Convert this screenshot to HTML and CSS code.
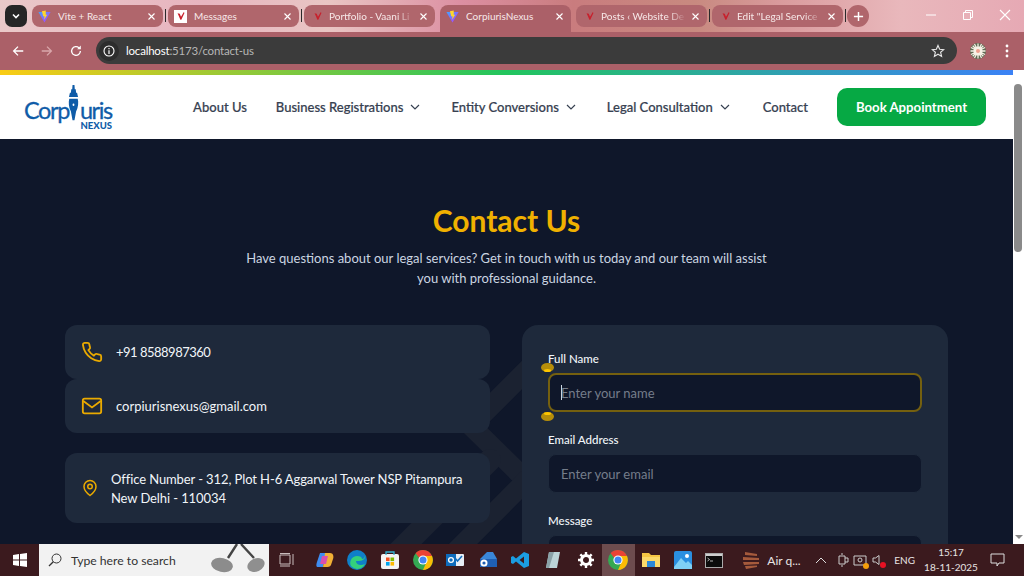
FILE: index.html
```html
<!DOCTYPE html>
<html lang="en">

<head>
    <meta charset="UTF-8">
    <meta name="viewport" content="width=device-width, initial-scale=1.0">
    <title>Contact Us</title>
    <link rel="stylesheet" href="styles.css">
</head>

<body>
    <svg class="defs" width="0" height="0">
        <defs>
            <linearGradient id="viteBody" x1="0" y1="0" x2="1" y2="1">
                <stop offset="0" stop-color="#41a5ff" />
                <stop offset="1" stop-color="#bd34fe" />
            </linearGradient>
            <symbol id="vite" viewBox="0 0 16 16">
                <path d="M0.5 2.5 L15.5 2.5 L8 15.5 Z" fill="url(#viteBody)" />
                <path d="M9.5 0.5 L4.8 1.6 L6.5 8 L8 7.5 L7.5 12 L11.5 5.5 L9.6 6 Z" fill="#ffd62e" />
            </symbol>
            <symbol id="check" viewBox="0 0 16 16">
                <path d="M2.5 3.5 L6 4.5 L8 9 L12.5 1.5 L13.5 3 L8.5 14 L7 14 L4.5 8 Z" fill="#c8202c" />
            </symbol>
            <symbol id="close" viewBox="0 0 12 12">
                <path d="M2 2 L10 10 M10 2 L2 10" stroke="#fff" stroke-width="1.5" fill="none" />
            </symbol>
            <symbol id="chromeLogo" viewBox="0 0 20 20">
                <circle cx="10" cy="10" r="10" fill="#34a853" />
                <path d="M10 0 A10 10 0 0 1 19 6 H10 A4 4 0 0 0 6.400 8.200 L2.600 3.300 A10 10 0 0 1 10 0 Z" fill="#ea4335" />
                <path d="M19 6 A10 10 0 0 1 10 20 L13.500 12 A4 4 0 0 0 13.500 8 L12 6 Z" fill="#fbbc05" />
                <circle cx="10" cy="10" r="4.600" fill="#fff" />
                <circle cx="10" cy="10" r="3.500" fill="#4285f4" />
            </symbol>
        </defs>
    </svg>

    <div class="chrome">
        <div class="tabstrip">
            <div class="tab-search">
                <svg width="10" height="10" viewBox="0 0 10 10">
                    <path d="M2 3.5 L5 6.5 L8 3.5" stroke="#fff" stroke-width="1.6" fill="none" />
                </svg>
            </div>
            <div class="tab">
                <svg class="favicon"><use href="#vite" /></svg>
                <span class="tab-title">Vite + React</span>
                <svg class="tab-close"><use href="#close" /></svg>
            </div>
            <span class="tab-sep"></span>
            <div class="tab">
                <span class="favicon-box"><svg class="favicon-small"><use href="#check" /></svg></span>
                <span class="tab-title">Messages</span>
                <svg class="tab-close"><use href="#close" /></svg>
            </div>
            <span class="tab-sep"></span>
            <div class="tab">
                <svg class="favicon-plain"><use href="#check" /></svg>
                <span class="tab-title tab-fade">Portfolio - Vaani Li</span>
                <svg class="tab-close"><use href="#close" /></svg>
            </div>
            <div class="tab tab-active">
                <svg class="favicon"><use href="#vite" /></svg>
                <span class="tab-title">CorpiurisNexus</span>
                <svg class="tab-close"><use href="#close" /></svg>
            </div>
            <div class="tab">
                <svg class="favicon-plain"><use href="#check" /></svg>
                <span class="tab-title tab-fade">Posts ‹ Website De</span>
                <svg class="tab-close"><use href="#close" /></svg>
            </div>
            <span class="tab-sep"></span>
            <div class="tab">
                <svg class="favicon-plain"><use href="#check" /></svg>
                <span class="tab-title tab-fade">Edit "Legal Service</span>
                <svg class="tab-close"><use href="#close" /></svg>
            </div>
            <span class="tab-sep"></span>
            <div class="tab-new">
                <svg width="11" height="11" viewBox="0 0 12 12">
                    <path d="M6 1 V11 M1 6 H11" stroke="#fff" stroke-width="1.6" />
                </svg>
            </div>
            <div class="window-controls">
                <svg width="12" height="12" viewBox="0 0 12 12">
                    <path d="M1 6 H11" stroke="#fff" stroke-width="1" />
                </svg>
                <svg width="12" height="12" viewBox="0 0 12 12">
                    <path d="M3.5 3 V1.5 H10.5 V8.5 H9 M1.5 3.5 H8.5 V10.5 H1.5 Z" stroke="#fff" stroke-width="1" fill="none" />
                </svg>
                <svg width="12" height="12" viewBox="0 0 12 12">
                    <path d="M1 1 L11 11 M11 1 L1 11" stroke="#fff" stroke-width="1.1" />
                </svg>
            </div>
        </div>

        <div class="toolbar">
            <svg class="tool-icon" viewBox="0 0 16 16">
                <path d="M14 8 H3 M8 3 L3 8 L8 13" stroke="#fff" stroke-width="1.5" fill="none" />
            </svg>
            <svg class="tool-icon" viewBox="0 0 16 16">
                <path d="M2 8 H13 M8 3 L13 8 L8 13" stroke="#d9a6aa" stroke-width="1.5" fill="none" />
            </svg>
            <svg class="tool-icon" viewBox="0 0 16 16">
                <path d="M13 8 A5 5 0 1 1 11.5 4.4" stroke="#fff" stroke-width="1.5" fill="none" />
                <path d="M13.5 1.8 V6 H9.3 Z" fill="#fff" />
            </svg>
            <div class="omnibox">
                <span class="omni-info">
                    <svg width="12" height="12" viewBox="0 0 12 12">
                        <circle cx="6" cy="6" r="5" stroke="#fff" stroke-width="1.1" fill="none" />
                        <path d="M6 5.2 V9 M6 3 V4.2" stroke="#fff" stroke-width="1.2" />
                    </svg>
                </span>
                <span class="omni-url"><b>localhost</b>:5173/contact-us</span>
                <svg class="omni-star" width="14" height="14" viewBox="0 0 16 16">
                    <path d="M8 1.6 L9.9 6 L14.6 6.4 L11 9.5 L12.1 14.2 L8 11.7 L3.9 14.2 L5 9.5 L1.4 6.4 L6.1 6 Z" stroke="#e6e6e6" stroke-width="1.3" fill="none" />
                </svg>
            </div>
            <svg class="avatar" width="16" height="16" viewBox="0 0 16 16">
                <circle cx="8" cy="8" r="8" fill="#5d6a52" />
                <path d="M8 0.5 V15.5 M0.5 8 H15.5 M2.700 2.700 L13.300 13.300 M13.300 2.700 L2.700 13.300 M4.500 1 L11.500 15 M11.500 1 L4.500 15 M1 4.500 L15 11.500 M15 4.500 L1 11.500" stroke="#f7f1e6" stroke-width="1.300" />
                <circle cx="8" cy="8" r="4.500" fill="#f7f1e6" />
                <circle cx="8" cy="8" r="2" fill="#ef9f8f" />
            </svg>
            <svg class="menu-dots" width="4" height="14" viewBox="0 0 4 14">
                <circle cx="2" cy="2" r="1.4" fill="#fff" />
                <circle cx="2" cy="7" r="1.4" fill="#fff" />
                <circle cx="2" cy="12" r="1.4" fill="#fff" />
            </svg>
        </div>
    </div>

    <div class="viewport">
        <div class="page">
            <div class="rainbow"></div>
            <header class="site-header">
                <a class="logo">
                    <svg class="logo-nib" viewBox="0 0 17 42" preserveAspectRatio="none">
                        <path d="M7 0 H10 L10.5 5 H12 L12.5 9 H14 L15.5 14 H1.5 L3 9 H4.5 L5 5 H6.5 Z" fill="#0f5ca8" />
                        <path d="M2 16 H15 C16.5 20 16 26 12.5 31 L10 41 H7 L4.5 31 C1 26 0.5 20 2 16 Z" fill="#0f5ca8" />
                        <circle cx="8.5" cy="23" r="1.4" fill="#fff" />
                    </svg>
                    <span class="logo-word">Corp<span class="logo-gap"></span>uris</span>
                    <span class="logo-sub">NEXUS</span>
                </a>
                <nav class="nav">
                    <a>About Us</a>
                    <a>Business Registrations <svg class="chev" viewBox="0 0 10 10"><path d="M1 3 L5 7 L9 3" /></svg></a>
                    <a>Entity Conversions <svg class="chev" viewBox="0 0 10 10"><path d="M1 3 L5 7 L9 3" /></svg></a>
                    <a class="nav-last-dropdown">Legal Consultation <svg class="chev" viewBox="0 0 10 10"><path d="M1 3 L5 7 L9 3" /></svg></a>
                    <a>Contact</a>
                    <a class="btn-book">Book Appointment</a>
                </nav>
            </header>

            <main class="contact">
                <svg class="contact-bg" width="1013" height="405" viewBox="0 0 1013 405">
                    <path d="M540 218 L471 287 L530 345" stroke="#1b2231" stroke-width="20" stroke-linecap="round" fill="none" />
                    <path d="M490 321 L395 416" stroke="#1b2231" stroke-width="22" stroke-linecap="round" fill="none" />
                    <path d="M530 338 L450 418" stroke="#1b2231" stroke-width="20" fill="none" />
                </svg>
                <h1 class="contact-title">Contact Us</h1>
                <p class="contact-sub">Have questions about our legal services? Get in touch with us today and our team will assist you with professional guidance.</p>

                <div class="contact-grid">
                    <div class="info-col">
                        <div class="info-card">
                            <svg class="info-icon" viewBox="0 0 24 24">
                                <path d="M22 16.920v3a2 2 0 0 1-2.180 2 19.790 19.790 0 0 1-8.630-3.070 19.500 19.500 0 0 1-6-6 19.790 19.790 0 0 1-3.070-8.670A2 2 0 0 1 4.110 2h3a2 2 0 0 1 2 1.720 12.840 12.840 0 0 0 .7 2.810 2 2 0 0 1-.45 2.110L8.090 9.910a16 16 0 0 0 6 6l1.270-1.270a2 2 0 0 1 2.110-.45 12.840 12.840 0 0 0 2.810.7A2 2 0 0 1 22 16.920z" />
                            </svg>
                            <span class="info-text info-phone">+91 8588987360</span>
                        </div>
                        <div class="info-card">
                            <svg class="info-icon" viewBox="0 0 24 24">
                                <rect x="2" y="4" width="20" height="16" rx="2" />
                                <path d="M2.500 6.500 L12 13.500 L21.500 6.500" />
                            </svg>
                            <span class="info-text">corpiurisnexus@gmail.com</span>
                        </div>
                        <div class="info-card info-card-tall">
                            <svg class="info-icon-pin" viewBox="0 0 24 24">
                                <path d="M20 10c0 6-8 12-8 12s-8-6-8-12a8 8 0 0 1 16 0Z" />
                                <circle cx="12" cy="10" r="3" />
                            </svg>
                            <span class="info-text info-address">Office Number - 312, Plot H-6 Aggarwal Tower NSP Pitampura<br>New Delhi - 110034</span>
                        </div>
                    </div>

                    <form class="form-card">
                        <label class="form-label">Full Name</label>
                        <div class="input-wrap">
                            <input class="form-input is-focus" type="text" placeholder="Enter your name">
                            <span class="caret"></span>
                            <span class="handle handle-top"></span>
                            <span class="handle handle-bottom"></span>
                        </div>
                        <label class="form-label">Email Address</label>
                        <input class="form-input" type="email" placeholder="Enter your email">
                        <label class="form-label">Message</label>
                        <textarea class="form-input form-text" rows="4"></textarea>
                    </form>
                </div>
            </main>
        </div>
        <div class="scrollbar">
            <span class="scroll-thumb"></span>
            <span class="scroll-arrow"></span>
        </div>
    </div>

    <div class="taskbar">
        <div class="task-start">
            <svg width="14" height="14" viewBox="0 0 14 14">
                <path d="M0 2 L6 1 V6.500 H0 Z M7 0.900 L14 0 V6.500 H7 Z M0 7.500 H6 V13 L0 12 Z M7 7.500 H14 V14 L7 13.100 Z" fill="#fff" />
            </svg>
        </div>
        <div class="task-search">
            <svg width="14" height="14" viewBox="0 0 14 14">
                <circle cx="8.500" cy="5.500" r="4.500" stroke="#333" stroke-width="1" fill="none" />
                <path d="M5.300 8.700 L1 13" stroke="#333" stroke-width="1.300" />
            </svg>
            <span class="task-search-text">Type here to search</span>
            <svg class="task-shoes" width="56" height="32" viewBox="0 0 56 32">
                <path d="M27 0 L18 14 M31 0 L44 14" stroke="#444" stroke-width="2.400" />
                <ellipse cx="12" cy="21" rx="11" ry="7" fill="#8c8c8c" transform="rotate(12 12 21)" />
                <ellipse cx="46" cy="21" rx="9" ry="6.500" fill="#8f8f8f" transform="rotate(-25 46 21)" />
            </svg>
        </div>
        <div class="task-icons">
            <span class="task-icon task-icon-view">
                <svg width="16" height="14" viewBox="0 0 16 14">
                    <path d="M1 2 H11 V11 H1 Z M14 1 V12 M1 0.500 H11 M1 13 H11" stroke="#c9bcbc" fill="none" />
                </svg>
            </span>
            <span class="task-icon">
                <svg width="18" height="18" viewBox="0 0 18 18">
                    <path d="M4 2 H10 L7 16 H2 C0 16 0 14 1 11 Z" fill="#3f8cf0" />
                    <path d="M9 2 H14 C17 2 18 5 17 8 L15 14 C14 16 12 16 10 16 H7 Z" fill="#f2b035" />
                    <path d="M6 5 H12 L10 13 H4 Z" fill="#d84fb0" />
                </svg>
            </span>
            <span class="task-icon">
                <svg width="20" height="20" viewBox="0 0 20 20">
                    <circle cx="10" cy="10" r="10" fill="#0f7fc9" />
                    <path d="M18 5 C19 11 13 11 9 11 C9 15 14 16 18 14 C16 19 9 21 4 16 C2 13 4 6 10 6 C13 6 15 7 15 9 C17 9 18 7 18 5 Z" fill="#33d07c" />
                </svg>
            </span>
            <span class="task-icon">
                <svg width="18" height="18" viewBox="0 0 18 18">
                    <rect x="0" y="3" width="18" height="15" rx="2" fill="#f4f4f4" />
                    <path d="M5 4 V1 H13 V4" stroke="#35b6d6" fill="none" stroke-width="1.300" />
                    <rect x="5" y="6.500" width="3.600" height="3.600" fill="#f25022" />
                    <rect x="9.500" y="6.500" width="3.600" height="3.600" fill="#7fba00" />
                    <rect x="5" y="11" width="3.600" height="3.600" fill="#00a4ef" />
                    <rect x="9.500" y="11" width="3.600" height="3.600" fill="#ffb900" />
                </svg>
            </span>
            <span class="task-icon">
                <svg width="20" height="20"><use href="#chromeLogo" /></svg>
            </span>
            <span class="task-icon">
                <svg width="18" height="16" viewBox="0 0 18 16">
                    <rect x="6" y="2" width="12" height="12" rx="1" fill="#e8eef6" />
                    <path d="M9 6 L11.500 9 L16 4" stroke="#0f6cbd" stroke-width="1.500" fill="none" />
                    <rect x="0" y="2" width="10" height="12" fill="#0f6cbd" />
                    <circle cx="5" cy="8" r="2.400" stroke="#fff" stroke-width="1.300" fill="none" />
                </svg>
            </span>
            <span class="task-icon">
                <svg width="18" height="18" viewBox="0 0 18 18">
                    <path d="M8 1 H14 L18 8 V16 H1 V8 Z" fill="#3a86d8" />
                    <path d="M1 8 H18 V16 H1 Z" fill="#1f5fb4" />
                    <circle cx="5" cy="12" r="3.500" fill="#fff" />
                    <circle cx="5" cy="12" r="1.600" fill="#1f5fb4" />
                </svg>
            </span>
            <span class="task-icon">
                <svg width="18" height="18" viewBox="0 0 18 18">
                    <path d="M13 1 L18 3 V15 L13 17 L5 10.500 L2 13 L0 12 V6 L2 5 L5 7.500 Z M13 5.500 L8.500 9 L13 12.500 Z" fill="#1b9de2" />
                </svg>
            </span>
            <span class="task-icon">
                <svg width="18" height="18" viewBox="0 0 18 18">
                    <path d="M5 1 H16 L13 17 H2 Z" fill="#bcd4d8" />
                    <path d="M5 1 H10 L5 17 H2 Z" fill="#8aa2a8" />
                </svg>
            </span>
            <span class="task-icon">
                <svg width="16" height="16" viewBox="0 0 16 16">
                    <circle cx="8" cy="8" r="4.500" stroke="#fff" stroke-width="3" fill="none" />
                    <path d="M8 0 V3 M8 13 V16 M0 8 H3 M13 8 H16 M2.300 2.300 L4.400 4.400 M11.600 11.600 L13.700 13.700 M13.700 2.300 L11.600 4.400 M4.400 11.600 L2.300 13.700" stroke="#fff" stroke-width="2.400" />
                </svg>
            </span>
            <span class="task-icon task-icon-active">
                <svg width="20" height="20"><use href="#chromeLogo" /></svg>
            </span>
            <span class="task-icon">
                <svg width="18" height="16" viewBox="0 0 18 16">
                    <path d="M0 1 H7 L9 3 H18 V15 H0 Z" fill="#f6c544" />
                    <rect x="0" y="5" width="18" height="10" fill="#fbd96a" />
                    <rect x="5" y="9" width="8" height="6" fill="#2b88d8" />
                </svg>
            </span>
            <span class="task-icon">
                <svg width="18" height="18" viewBox="0 0 18 18">
                    <rect width="18" height="18" rx="2" fill="#2a8fe0" />
                    <path d="M0 16 L7 7 L12 12 L14 10 L18 14 V18 H0 Z" fill="#7fd0f5" />
                    <circle cx="13" cy="5" r="2" fill="#fff" />
                </svg>
            </span>
            <span class="task-icon task-icon-term">
                <svg width="18" height="15" viewBox="0 0 18 15">
                    <rect x="0.500" y="0.500" width="17" height="14" fill="#0c0c0c" stroke="#aaa" />
                    <rect x="1" y="1" width="16" height="2" fill="#cfcfcf" />
                    <path d="M2.500 5 L4.500 6.500 L2.500 8 M5 8 H8" stroke="#ddd" fill="none" stroke-width="0.800" />
                </svg>
            </span>
        </div>
        <div class="task-weather">
            <svg width="18" height="20" viewBox="0 0 18 20">
                <path d="M3 2 L15 4 V6 L3 5 Z M1 7 L17 8 V10 L1 10 Z M1 12 L17 12 V14 L2 15 Z M3 16 L15 15.500 V17 L4 19 Z" fill="#a55a3c" />
            </svg>
            <span>Air q...</span>
        </div>
        <div class="task-tray">
            <svg class="tray-up" width="12" height="8" viewBox="0 0 12 8">
                <path d="M1 7 L6 2 L11 7" stroke="#ddd" fill="none" />
            </svg>
            <svg class="tray-video" width="12" height="14" viewBox="0 0 12 14">
                <path d="M2 3 H8 V11 H2 Z M8 5 H11 V9 H8 M4 1 H6 M4 13 H6" stroke="#ccc" fill="none" />
            </svg>
            <span class="tray-meet">
                <svg width="14" height="13" viewBox="0 0 14 13">
                    <path d="M1 2 H13 V11 H1 Z" stroke="#ccc" fill="none" />
                    <circle cx="7" cy="6" r="2" stroke="#ccc" fill="none" />
                </svg>
                <span class="tray-dot-orange"></span>
            </span>
            <span class="tray-sound">
                <svg width="12" height="12" viewBox="0 0 12 12">
                    <path d="M1 4 H3.500 L7 1.500 V10.500 L3.500 8 H1 Z" stroke="#ccc" fill="none" />
                </svg>
                <span class="tray-dot-red"></span>
            </span>
            <span class="tray-lang">ENG</span>
            <span class="tray-clock">15:17<br>18-11-2025</span>
            <svg class="tray-notify" width="15" height="14" viewBox="0 0 15 14">
                <path d="M1 1 H14 V10 H9 L7 13 V10 H1 Z" stroke="#ddd" fill="none" />
            </svg>
        </div>
    </div>
</body>

</html>
```

FILE: styles.css
```css
:root {
    --tab-color: #b0666c;
    --bar-color: #ab6068;
    --navy: #0f172a;
    --card: #1e293b;
    --gold: #eaaa00;
    --title-gold: #f0b100;
    --text: #f1f5f9;
}

* {
    margin: 0;
    padding: 0;
    box-sizing: border-box;
}

html,
body {
    height: 576px;
    overflow: hidden;
}

body {
    display: flex;
    flex-direction: column;
    font-family: Lato, "Noto Sans", sans-serif;
    background: var(--navy);
}

.defs {
    position: absolute;
}

/* browser frame */
.chrome {
    flex: none;
    height: 70px;
    background: var(--bar-color);
}

.tabstrip {
    display: flex;
    align-items: flex-start;
    height: 32px;
    padding: 5px 0 0 5px;
    background: linear-gradient(90deg, #eac9c9 0%, #e7b4bf 20%, #e9c6c4 32%, #dc8fa2 45%, #c97c7e 56%, #c88a80 68%, #d99a9c 76%, #e9b8bc 88%, #e6a9b4 100%);
}

.tab-search {
    display: flex;
    align-items: center;
    justify-content: center;
    width: 22px;
    height: 22px;
    margin-right: 5px;
    border-radius: 7px;
    background: #262626;
}

.tab {
    display: flex;
    align-items: center;
    width: 131px;
    height: 22px;
    padding: 0 6px;
    border-radius: 8px;
    background: var(--tab-color);
    color: #f7e8e8;
    font-size: 10px;
}

.tab-active {
    height: 27px;
    margin: 0 5px;
    padding-bottom: 5px;
    border-radius: 8px 8px 0 0;
    background: var(--bar-color);
}

.tab-title {
    flex: 1;
    min-width: 0;
    margin-left: 7px;
    overflow: hidden;
    white-space: nowrap;
}

.tab-fade {
    -webkit-mask-image: linear-gradient(90deg, #000 78%, transparent 100%);
    mask-image: linear-gradient(90deg, #000 78%, transparent 100%);
}

.favicon {
    flex: none;
    width: 13px;
    height: 13px;
}

.favicon-box {
    display: flex;
    flex: none;
    align-items: center;
    justify-content: center;
    width: 13px;
    height: 13px;
    background: #fff;
}

.favicon-small {
    width: 10px;
    height: 10px;
}

.favicon-plain {
    flex: none;
    width: 10px;
    height: 10px;
    margin-left: 3px;
    margin-right: -1px;
}

.tab-close {
    flex: none;
    width: 9px;
    height: 9px;
    margin-left: 4px;
    margin-right: 1px;
}

.tab-sep {
    flex: none;
    width: 1px;
    height: 13px;
    margin: 4px 2px;
    background: #2a2a2a;
}

.tab-new {
    display: flex;
    align-items: center;
    justify-content: center;
    width: 22px;
    height: 22px;
    margin-left: -1px;
    border-radius: 50%;
    background: var(--tab-color);
}

.window-controls {
    display: flex;
    gap: 25px;
    margin-left: auto;
    padding: 4px 13px 0 0;
}

.toolbar {
    display: flex;
    align-items: center;
    height: 38px;
    padding: 0 0 1px 11px;
}

.tool-icon {
    width: 14px;
    height: 14px;
    margin-right: 15px;
}

.omnibox {
    display: flex;
    align-items: center;
    width: 861px;
    height: 27px;
    margin-left: -2px;
    padding: 0 12px 0 3px;
    border-radius: 14px;
    background: #3b3b3b;
    font-size: 11.500px;
    letter-spacing: -0.200px;
    color: #b6b6b6;
}

.omni-info {
    display: flex;
    align-items: center;
    justify-content: center;
    width: 20px;
    height: 20px;
    margin-right: 7px;
    border-radius: 50%;
    background: #2d2d2d;
}

.omni-url b {
    font-weight: 400;
    color: #fff;
}

.omni-star {
    margin-left: auto;
}

.avatar {
    margin-left: 13px;
}

.menu-dots {
    margin-left: 19px;
}

/* page */
.viewport {
    flex: 1;
    display: flex;
    min-height: 0;
}

.page {
    width: 1013px;
    overflow: hidden;
    background: var(--navy);
}

.rainbow {
    height: 5px;
    background: linear-gradient(90deg, #facc15 0%, #22c55e 50%, #3b82f6 100%);
}

.scrollbar {
    position: relative;
    width: 11px;
    background: #fff;
}

.scroll-thumb {
    display: block;
    width: 8px;
    height: 168px;
    margin: 14px 0 0 1px;
    border-radius: 4px;
    background: #8a8a8a;
}

.scroll-arrow {
    position: absolute;
    left: 2px;
    bottom: 5px;
    border-left: 4px solid transparent;
    border-right: 4px solid transparent;
    border-top: 4px solid #8a8a8a;
}

.site-header {
    display: flex;
    align-items: center;
    justify-content: space-between;
    height: 64px;
    padding: 0 27px 0 25px;
    background: #fff;
}

.logo {
    position: relative;
    display: block;
    width: 88px;
    height: 46px;
    color: #0f5ca8;
}

.logo-word {
    position: absolute;
    left: -1px;
    top: 18px;
    font-size: 23.500px;
    font-weight: 400;
    letter-spacing: -1.400px;
    line-height: 17px;
    white-space: nowrap;
    -webkit-text-stroke: 0.300px #0f5ca8;
}

.logo-gap {
    display: inline-block;
    width: 11px;
}

.logo-nib {
    position: absolute;
    left: 43px;
    top: 1px;
    width: 11px;
    height: 36px;
}

.logo-sub {
    position: absolute;
    right: 1px;
    bottom: 0;
    font-size: 9.500px;
    font-weight: 900;
    line-height: 9px;
}

.nav {
    display: flex;
    align-items: center;
    font-size: 13px;
    font-weight: 500;
    color: #374151;
}

.nav a {
    display: flex;
    align-items: center;
    margin-right: 29px;
    white-space: nowrap;
    -webkit-text-stroke: 0.200px #374151;
}

.nav .nav-last-dropdown {
    margin-right: 31px;
}

.chev {
    width: 10px;
    height: 10px;
    margin-left: 7px;
    margin-right: 2px;
    stroke: #374151;
    stroke-width: 1.200;
    fill: none;
}

.nav .btn-book {
    justify-content: center;
    width: 149px;
    height: 38px;
    margin: 0;
    border-radius: 10px;
    background: #06a944;
    color: #fff;
    font-size: 13.200px;
    font-weight: 700;
    -webkit-text-stroke: 0;
}

.contact {
    position: relative;
    height: 405px;
    padding: 63px 65px 0;
}

.contact-bg {
    position: absolute;
    left: 0;
    top: 0;
}

.contact-title {
    position: relative;
    font-size: 30px;
    font-weight: 700;
    line-height: 36px;
    text-align: center;
    color: var(--title-gold);
}

.contact-sub {
    position: relative;
    width: 540px;
    margin: 10px auto 0;
    font-size: 13px;
    line-height: 20px;
    text-align: center;
    color: #cbd5e1;
}

.contact-grid {
    position: relative;
    display: grid;
    grid-template-columns: 425px 426px;
    gap: 32px;
    margin-top: 37px;
}

.info-card {
    display: flex;
    align-items: center;
    height: 54px;
    padding: 0 16px;
    border-radius: 12px;
    background: var(--card);
    color: var(--text);
}

.info-card-tall {
    height: 70px;
    margin-top: 20px;
}

.info-icon {
    flex: none;
    width: 22px;
    height: 22px;
    margin-right: 13px;
    stroke: var(--gold);
    stroke-width: 2;
    fill: none;
}

.info-icon-pin {
    flex: none;
    width: 18px;
    height: 18px;
    margin-right: 12px;
    stroke: var(--gold);
    stroke-width: 2;
    fill: none;
}

.info-text {
    padding-top: 2px;
    font-size: 13px;
    line-height: 19.500px;
}

.info-phone {
    letter-spacing: -0.500px;
}

.info-address {
    letter-spacing: -0.100px;
}

.form-card {
    min-height: 300px;
    padding: 26px;
    border-radius: 16px;
    background: var(--card);
}

.form-label {
    display: block;
    margin-bottom: 7px;
    font-size: 11.500px;
    font-weight: 500;
    line-height: 15px;
    color: var(--text);
}

.input-wrap {
    position: relative;
}

.form-input {
    display: block;
    width: 100%;
    height: 39px;
    margin-bottom: 20px;
    padding: 0 12px;
    border: 1px solid #1e293b;
    border-radius: 8px;
    outline: none;
    background: var(--navy);
    font-family: inherit;
    font-size: 13px;
    color: var(--text);
}

.form-input::placeholder {
    color: #757d8a;
}

.form-input.is-focus {
    padding: 0 11px;
    border: 2px solid #75600f;
}

.form-text {
    height: 80px;
    resize: none;
}

.caret {
    position: absolute;
    left: 13px;
    top: 12px;
    width: 1px;
    height: 15px;
    background: #cbd5e1;
}

.handle {
    position: absolute;
    left: -7px;
    width: 13px;
    height: 9px;
    border-radius: 50%;
    background: #b68e0a;
}

.handle::after {
    content: "";
    position: absolute;
    left: 3px;
    width: 7px;
    height: 3px;
    border-radius: 50%;
    background: #fdc500;
}

.handle-top {
    top: -10px;
}

.handle-top::after {
    bottom: 0;
}

.handle-bottom {
    top: 39px;
}

.handle-bottom::after {
    top: 0;
}

/* windows taskbar */
.taskbar {
    flex: none;
    display: flex;
    align-items: stretch;
    height: 32px;
    background: #3b1a1e;
    color: #e8e4e4;
}

.task-start {
    display: flex;
    align-items: center;
    justify-content: center;
    width: 39px;
}

.task-search {
    position: relative;
    display: flex;
    align-items: center;
    width: 230px;
    padding-left: 9px;
    overflow: hidden;
    background: #f2f2f2;
    color: #333;
    font-size: 12.200px;
}

.task-search-text {
    margin-left: 9px;
}

.task-shoes {
    position: absolute;
    right: 3px;
    top: 0;
}

.task-icons {
    display: flex;
    margin-left: 2px;
}

.task-icon {
    display: flex;
    align-items: center;
    justify-content: center;
    width: 32.600px;
}

.task-icon-view {
    margin-right: 5px;
}

.task-icon-active {
    background: #6d4c4e;
}

.task-icon-term {
    margin-left: -2px;
}

.task-weather {
    display: flex;
    align-items: center;
    gap: 7px;
    margin-left: 12px;
    font-size: 12px;
}

.task-tray {
    display: flex;
    align-items: center;
    margin-left: auto;
    padding-right: 19px;
    font-size: 10px;
}

.tray-video {
    margin-left: 10px;
}

.tray-meet {
    margin-left: 4px;
}

.tray-sound {
    margin-left: 5px;
}

.tray-meet,
.tray-sound {
    position: relative;
    display: flex;
}

.tray-dot-orange,
.tray-dot-red {
    position: absolute;
    right: -2px;
    bottom: -2px;
    width: 6px;
    height: 6px;
    border-radius: 50%;
}

.tray-dot-orange {
    background: #f59e0b;
}

.tray-dot-red {
    background: #e81123;
}

.tray-lang {
    margin-left: 10px;
}

.tray-clock {
    width: 54px;
    margin-left: 9px;
    line-height: 15px;
    text-align: center;
    white-space: nowrap;
}

.tray-notify {
    margin-left: 12px;
}
```
